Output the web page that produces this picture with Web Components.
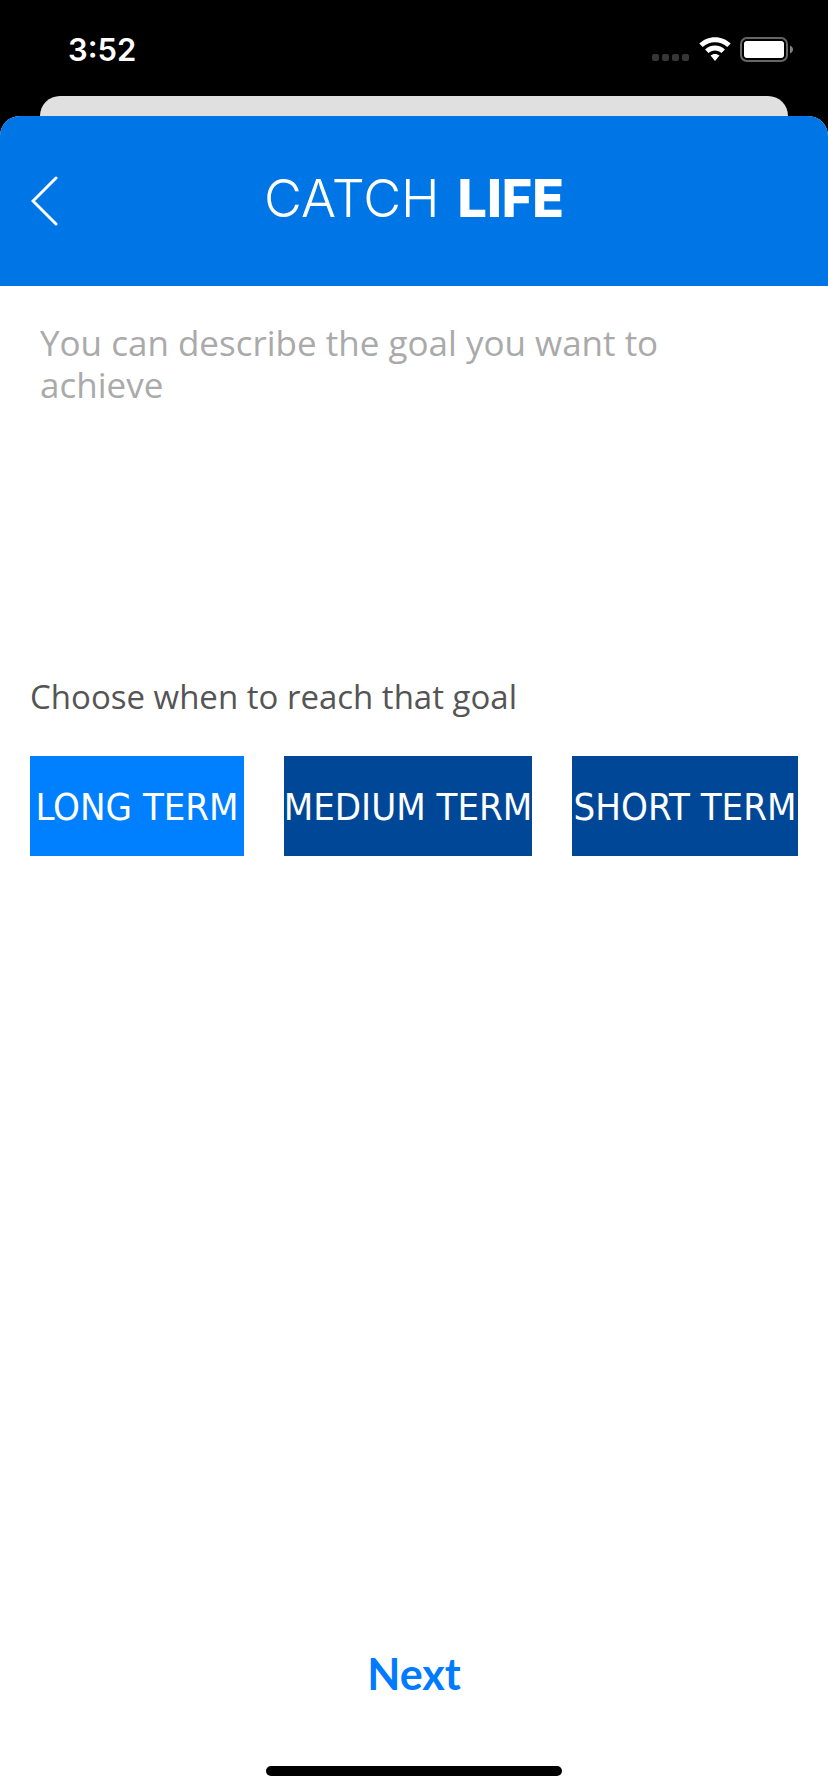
<!DOCTYPE html>
<html lang="en">
<head>
<meta charset="utf-8">
<meta name="viewport" content="width=device-width, initial-scale=1">
<title>Catch Life</title>
<style>
  html, body { margin: 0; background: #000; }
  body { font-family: "Open Sans", "Noto Sans", sans-serif; }
</style>
</head>
<body>
<goal-screen></goal-screen>
<script>
class CatchElement extends HTMLElement {
  constructor() {
    super();
    this.attachShadow({ mode: 'open' }).innerHTML =
      '<style>*{box-sizing:border-box}' + this.constructor.css + '</style>' + this.constructor.html;
  }
}

customElements.define('status-bar', class extends CatchElement {
  static css = `
    :host { display: flex; justify-content: space-between; height: 96px; padding: 0 34px 0 68px; color: #fff; }
    time { font: 600 31px/100px Inter, sans-serif; }
    .icons { display: flex; align-items: flex-start; padding-top: 36px; gap: 9px; }
    svg { display: block; }
    .signal { margin-top: 18px; }
  `;
  static html = `
    <time>3:52</time>
    <div class="icons">
      <svg class="signal" width="38" height="8" fill="#363636" aria-hidden="true">
        <rect x="0" width="7" height="7" rx="2"/><rect x="10" width="7" height="7" rx="2"/>
        <rect x="20" width="7" height="7" rx="2"/><rect x="30" width="7" height="7" rx="2"/>
      </svg>
      <svg width="32" height="26" viewBox="0 0 32 26" fill="#fff" role="img" aria-label="Wi-Fi">
        <path d="M16 1.2C22.2 1.2 27.6 3.600 31.700 7.500L28.300 11.100C25 8 20.800 6.200 16 6.200S7 8 3.700 11.100L.3 7.500C4.400 3.600 9.800 1.200 16 1.200Z"/>
        <path d="M16 9.600C19.900 9.600 23.300 11.100 25.900 13.500L22.500 17.100C20.800 15.500 18.500 14.600 16 14.600S11.200 15.500 9.500 17.100L6.100 13.500C8.700 11.100 12.100 9.600 16 9.600Z"/>
        <path d="M16 18C17.800 18 19.300 18.600 20.500 19.600L16 25 11.500 19.600C12.700 18.600 14.200 18 16 18Z"/>
      </svg>
      <svg width="54" height="26" viewBox="0 0 54 26" role="img" aria-label="Battery">
        <rect x="1" y="2" width="46" height="23" rx="6" fill="none" stroke="#666" stroke-width="2"/>
        <rect x="4" y="5" width="40" height="17" rx="3" fill="#fff"/>
        <path d="M50 9.500C54 11 54 16 50 17.500Z" fill="#808080"/>
      </svg>
    </div>
  `;
});

customElements.define('app-header', class extends CatchElement {
  static css = `
    :host { display: grid; grid-template-columns: 90px 1fr 90px; height: 170px; align-items: center; background: #0075e5; color: #fff; }
    button { all: unset; cursor: pointer; padding-left: 31px; }
    svg { display: block; }
    h1 { margin: 0; padding-bottom: 4px; display: flex; justify-content: center; gap: 18px; font: 300 52px/64px Inter, sans-serif; }
  `;
  static html = `
    <button type="button" aria-label="Back">
      <svg width="28" height="50" fill="none" stroke="#fff" stroke-width="3" stroke-linecap="round"><path d="M25 2 2 25 25 48"/></svg>
    </button>
    <h1><slot></slot></h1>
  `;
});

customElements.define('goal-input', class extends CatchElement {
  static css = `
    :host { display: block; }
    textarea { display: block; width: 100%; height: 384px; margin: 0; padding: 36px 60px 0 40px; border: 0; outline: 0; resize: none; background: transparent; color: #555; font: 400 35px/42px "Open Sans", sans-serif; }
    textarea::placeholder { color: #aaa; opacity: 1; }
  `;
  static html = `<textarea aria-label="Goal" placeholder="You can describe the goal you want to achieve"></textarea>`;
});

customElements.define('term-button', class extends CatchElement {
  static css = `
    :host { display: block; min-width: 0; }
    button { display: flex; justify-content: center; align-items: center; width: 100%; height: 100px; padding: 2px 0 0; border: 0; cursor: pointer; background: #004897; color: #fff; white-space: nowrap; font: 400 38px/44px "DejaVu Sans Condensed", "DejaVu Sans", sans-serif; }
    :host([selected]) button { background: #0080ff; }
  `;
  static html = `<button type="button"><slot></slot></button>`;
  connectedCallback() {
    this.shadowRoot.querySelector('button').setAttribute('aria-pressed', this.hasAttribute('selected'));
  }
});

customElements.define('term-picker', class extends CatchElement {
  static css = `
    :host { display: block; padding: 2px 30px 0; }
    h2 { margin: 0 0 34px; color: #555; font: 400 33px/50px "Open Sans", sans-serif; }
    .terms { display: grid; grid-template-columns: 214fr 248fr 226fr; gap: 40px; }
  `;
  static html = `
    <h2 id="label">Choose when to reach that goal</h2>
    <div class="terms" role="group" aria-labelledby="label">
      <term-button selected>LONG TERM</term-button>
      <term-button>MEDIUM TERM</term-button>
      <term-button>SHORT TERM</term-button>
    </div>
  `;
  connectedCallback() {
    const terms = [...this.shadowRoot.querySelectorAll('term-button')];
    for (const term of terms) term.addEventListener('click', () => {
      for (const other of terms) {
        other.toggleAttribute('selected', other === term);
        other.connectedCallback();
      }
    });
  }
});

customElements.define('next-bar', class extends CatchElement {
  static css = `
    :host { display: flex; flex-direction: column; align-items: center; gap: 62px; margin-top: auto; padding-bottom: 16px; }
    button { border: 0; padding: 0 20px; background: none; color: #007aff; cursor: pointer; font: 700 43px/60px Lato, sans-serif; }
    .home { width: 296px; height: 10px; border-radius: 5px; background: #000; }
  `;
  static html = `<button type="button">Next</button><div class="home"></div>`;
});

customElements.define('goal-screen', class extends CatchElement {
  static css = `
    :host { display: flex; flex-direction: column; min-height: 100vh; background: #000; }
    .behind { height: 20px; margin: 0 40px; border-radius: 20px 20px 0 0; background: #e0e0e0; }
    main { flex: 1; display: flex; flex-direction: column; overflow: hidden; border-radius: 20px 20px 0 0; background: #fff; }
    b { font-weight: 800; }
  `;
  static html = `
    <status-bar></status-bar>
    <div class="behind"></div>
    <main>
      <app-header><span>CATCH</span><b>LIFE</b></app-header>
      <goal-input></goal-input>
      <term-picker></term-picker>
      <next-bar></next-bar>
    </main>
  `;
});
</script>
</body>
</html>
